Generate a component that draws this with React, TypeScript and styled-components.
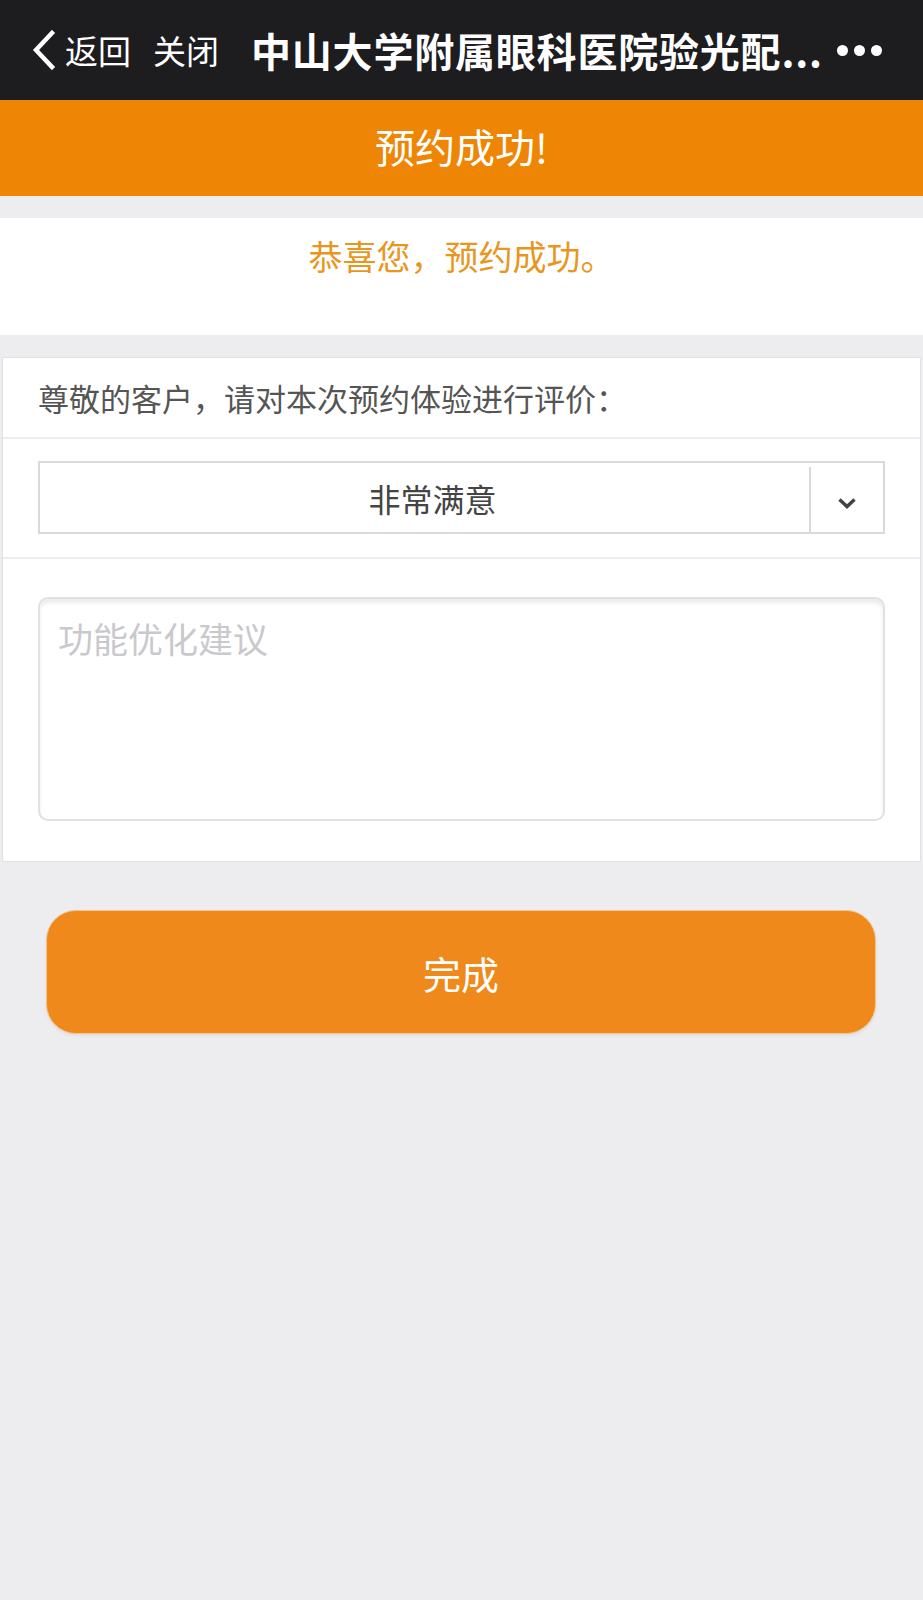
import React from "react";
import styled, { createGlobalStyle } from "styled-components";

const GlobalStyle = createGlobalStyle`
  html, body {
    margin: 0;
    padding: 0;
    background: #ededf0;
  }
  body {
    font-family: "Noto Sans CJK SC", "Noto Sans", sans-serif;
  }
  * {
    box-sizing: border-box;
  }
`;

const Page = styled.div`
  min-height: 1600px;
  background: #ededf0;
  display: flex;
  flex-direction: column;
`;

const NavBar = styled.div`
  height: 100px;
  background: #1d1c1f;
  color: #fff;
  display: flex;
  align-items: center;
  padding: 0 0 0 32px;
`;

const BackIcon = styled.svg`
  width: 24px;
  height: 40px;
  flex: none;
`;

const NavLink = styled.span<{ $gap: number }>`
  font-size: 33px;
  margin-left: ${p => p.$gap}px;
  line-height: 1;
  white-space: nowrap;
`;

const NavTitle = styled.span`
  font-size: 40px;
  font-weight: 700;
  margin-left: 32px;
  line-height: 1;
  white-space: nowrap;
  letter-spacing: 0.8px;
`;

const Dots = styled.div`
  display: flex;
  gap: 6px;
  margin-left: 14px;
`;

const Dot = styled.span`
  width: 11px;
  height: 11px;
  border-radius: 50%;
  background: #fff;
`;

const Banner = styled.div`
  height: 96px;
  background: #ee8504;
  color: #fff;
  font-size: 40px;
  display: flex;
  align-items: center;
  justify-content: center;
  padding-bottom: 4px;
`;

const Notice = styled.div`
  margin-top: 22px;
  height: 117px;
  background: #fff;
  color: #e8961e;
  font-size: 34px;
  display: flex;
  justify-content: center;
  padding-top: 18px;
  line-height: 1.2;
`;

const Card = styled.div`
  margin: 22px 2px 0;
  background: #fff;
  border: 1px solid #e1e1e4;
  border-radius: 2px;
`;

const Row = styled.div<{ $pad: string; $last?: boolean }>`
  padding: ${p => p.$pad};
  border-bottom: ${p => (p.$last ? "none" : "2px solid #ededf0")};
`;

const Label = styled.div`
  height: 81px;
  display: flex;
  align-items: center;
  padding-left: 35px;
  font-size: 31px;
  color: #555;
  border-bottom: 2px solid #ededf0;
`;

const Select = styled.div`
  height: 73px;
  display: flex;
  border: 2px solid #d9d9dc;
  background: #fff;
`;

const SelectValue = styled.div`
  flex: 1;
  display: flex;
  align-items: center;
  justify-content: center;
  padding-left: 16px;
  font-size: 32px;
  color: #444;
`;

const SelectArrow = styled.div`
  width: 74px;
  border-left: 2px solid #d9d9dc;
  display: flex;
  align-items: center;
  justify-content: center;
  margin-top: 4px;
  padding-top: 6px;
`;

const Suggest = styled.textarea`
  display: block;
  width: 100%;
  height: 224px;
  border: 2px solid #e1e1e4;
  border-radius: 10px;
  box-shadow: inset 0 4px 4px rgba(0, 0, 0, 0.08);
  padding: 16px 18px;
  font-family: inherit;
  font-size: 35px;
  line-height: 1.3;
  color: #333;
  resize: none;
  outline: none;
  background: #fff;
  &::placeholder {
    color: #c9c9cd;
  }
`;

const DoneButton = styled.button`
  margin: 48px 47px 0 46px;
  height: 124px;
  border: 1px solid #f3c48c;
  border-radius: 30px;
  background: #ef891b;
  color: #fff;
  font-family: inherit;
  font-size: 38px;
  display: flex;
  align-items: center;
  justify-content: center;
  box-shadow: 0 2px 3px rgba(0, 0, 0, 0.06);
`;

export default function App() {
  return (
    <Page>
      <GlobalStyle />
      <NavBar>
        <BackIcon viewBox="0 0 24 40">
          <path d="M20 3 L4 20 L20 37" fill="none" stroke="#fff" strokeWidth="4.5" strokeLinecap="square" />
        </BackIcon>
        <NavLink $gap={9}>返回</NavLink>
        <NavLink $gap={22}>关闭</NavLink>
        <NavTitle>中山大学附属眼科医院验光配...</NavTitle>
        <Dots>
          <Dot />
          <Dot />
          <Dot />
        </Dots>
      </NavBar>

      <Banner>预约成功!</Banner>

      <Notice>恭喜您，预约成功。</Notice>

      <Card>
        <Label>尊敬的客户，请对本次预约体验进行评价：</Label>
        <Row $pad="22px 35px 23px 35px">
          <Select>
            <SelectValue>非常满意</SelectValue>
            <SelectArrow>
              <svg width="20" height="12" viewBox="0 0 20 12">
                <path d="M2.5 2.5 L10 9.5 L17.5 2.5" fill="none" stroke="#444" strokeWidth="3.5" />
              </svg>
            </SelectArrow>
          </Select>
        </Row>
        <Row $pad="38px 35px 40px 35px" $last>
          <Suggest placeholder="功能优化建议" />
        </Row>
      </Card>

      <DoneButton>完成</DoneButton>
    </Page>
  );
}
